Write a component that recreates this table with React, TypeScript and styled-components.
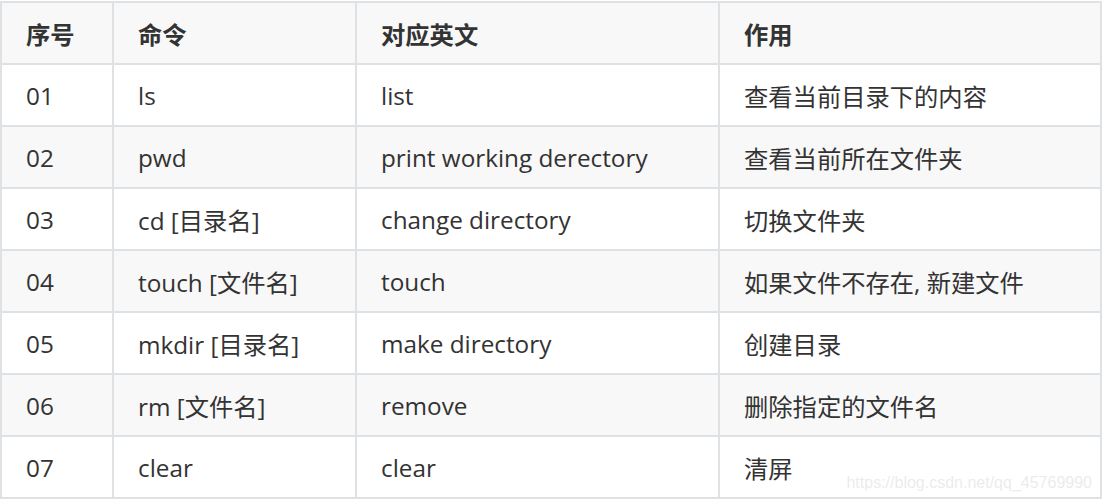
import React from 'react';
import styled, { createGlobalStyle } from 'styled-components';

const GlobalStyle = createGlobalStyle`
  html, body {
    margin: 0;
    padding: 0;
    background: #ffffff;
  }
  body {
    font-family: "Open Sans", "Noto Sans CJK SC", sans-serif;
    color: #333333;
  }
`;

const Page = styled.div`
  position: relative;
  width: 1102px;
  height: 500px;
  padding-top: 1px;
  box-sizing: border-box;
  overflow: hidden;
`;

const Table = styled.table`
  width: 1102px;
  table-layout: fixed;
  border-collapse: collapse;
  font-size: 24.3px;
`;

const Row = styled.tr<{ $shaded: boolean }>`
  height: 62px;
  background-color: ${(p) => (p.$shaded ? '#f8f8f8' : '#ffffff')};
`;

const HeadCell = styled.th`
  border: 2px solid #dfe2e5;
  padding: 0 24px;
  text-align: left;
  font-weight: 700;
  white-space: nowrap;
`;

const Cell = styled.td`
  border: 2px solid #dfe2e5;
  padding: 0 24px;
  text-align: left;
  white-space: nowrap;
`;

const Watermark = styled.div`
  position: absolute;
  right: 10px;
  bottom: 8px;
  font-family: "Liberation Sans", Arial, sans-serif;
  font-size: 16px;
  color: rgba(210, 210, 210, 0.45);
  pointer-events: none;
`;

const rows: [string, string, string, string][] = [
  ['01', 'ls', 'list', '查看当前目录下的内容'],
  ['02', 'pwd', 'print working derectory', '查看当前所在文件夹'],
  ['03', 'cd [目录名]', 'change directory', '切换文件夹'],
  ['04', 'touch [文件名]', 'touch', '如果文件不存在, 新建文件'],
  ['05', 'mkdir [目录名]', 'make directory', '创建目录'],
  ['06', 'rm [文件名]', 'remove', '删除指定的文件名'],
  ['07', 'clear', 'clear', '清屏'],
];

export default function App() {
  return (
    <Page>
      <GlobalStyle />
      <Table>
        <colgroup>
          <col style={{ width: 112 }} />
          <col style={{ width: 243 }} />
          <col style={{ width: 363 }} />
          <col />
        </colgroup>
        <thead>
          <Row $shaded>
            <HeadCell>序号</HeadCell>
            <HeadCell>命令</HeadCell>
            <HeadCell>对应英文</HeadCell>
            <HeadCell>作用</HeadCell>
          </Row>
        </thead>
        <tbody>
          {rows.map((r, i) => (
            <Row key={r[0]} $shaded={i % 2 === 1}>
              {r.map((c, j) => (
                <Cell key={j}>{c}</Cell>
              ))}
            </Row>
          ))}
        </tbody>
      </Table>
      <Watermark>https://blog.csdn.net/qq_45769990</Watermark>
    </Page>
  );
}
